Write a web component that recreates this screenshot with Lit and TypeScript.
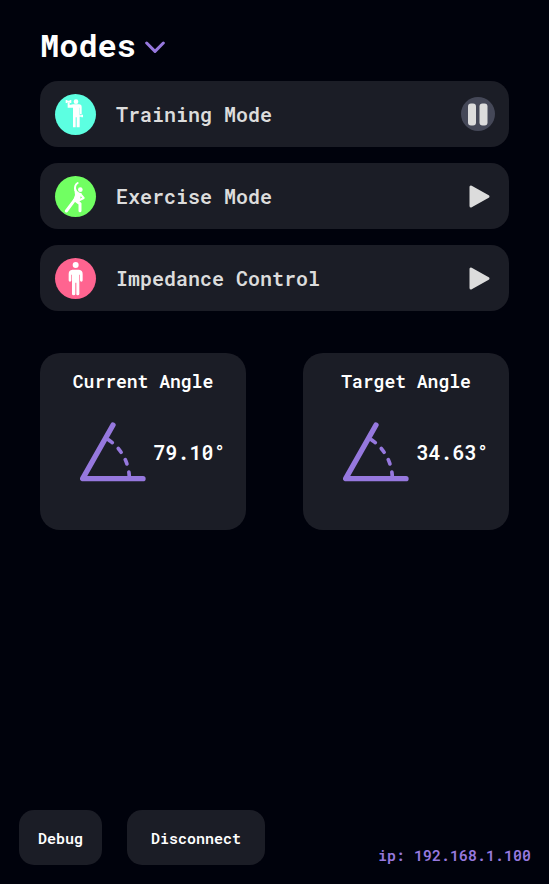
import { LitElement, html, css, svg } from "lit";
import { customElement, property, state } from "lit/decorators.js";

const figures = {
  training: svg`
    <circle cx="92" cy="50" r="7"/>
    <path d="M83 58H101Q109 58 109 66V88H104V68H103V127H94V97H91V127H83V68H67V52H73V60Z"/>
    <path d="M61 45h5v2h7v-2h5v9h-5v-2h-7v2h-5zM96 89h4v2h8v-2h5v8h-5v-2h-8v2h-4z"/>`,
  exercise: svg`
    <circle cx="105" cy="68" r="7"/>
    <path class="arm" d="M97 48C89 53 88 62 90 70"/>
    <path class="limb" d="M87 100L63 132M90 100L104 110V131"/>
    <path d="M87 67L92 66Q97 77 109 79L104 96L102 107L82 103L89 84Z"/>
    <path class="arm" d="M106 82L115 93L103 99"/>`,
  impedance: svg`
    <circle cx="91" cy="48" r="9"/>
    <path d="M81 62H101Q112 63 112 75V94Q112 98 108 98T104 94V77H102V135Q102 139 97 139T93 135V101H90V135Q90 139 85 139T80 135V77H78V94Q78 98 74 98T70 94V75Q70 63 81 62Z"/>`,
};

type Figure = keyof typeof figures;

@customElement("mode-row")
class ModeRow extends LitElement {
  @property() label = "";
  @property() figure: Figure = "training";
  @property({ type: Boolean }) active = false;

  static styles = css`
    :host {
      display: flex;
      align-items: center;
      gap: 20px;
      min-height: 66px;
      padding: 0 14px 0 15px;
      box-sizing: border-box;
      border-radius: 18px;
      background: #1b1d26;
    }
    .badge {
      flex: none;
      width: 41px;
      height: 41px;
      border-radius: 50%;
      fill: #fff;
    }
    .training { background: #5cffe1; }
    .exercise { background: #71ff62; }
    .impedance { background: #ff6490; }
    .limb, .arm {
      fill: none;
      stroke: #fff;
      stroke-width: 9;
      stroke-linecap: round;
      stroke-linejoin: round;
    }
    .arm { stroke-width: 6; }
    .label {
      flex: 1;
      margin: 0;
      font-size: 20px;
      line-height: 24px;
      font-weight: 600;
      color: #dcdcdc;
    }
    .toggle {
      flex: none;
      width: 34px;
      height: 34px;
      padding: 0;
      border: 0;
      border-radius: 50%;
      background: none;
      cursor: pointer;
    }
    .toggle.on { background: #454858; }
    .glyph {
      display: block;
      width: 34px;
      height: 34px;
      fill: #dcdcdc;
    }
    .play {
      stroke: #dcdcdc;
      stroke-width: 3;
      stroke-linejoin: round;
    }
  `;

  private toggle() {
    this.dispatchEvent(new CustomEvent("mode-toggle"));
  }

  render() {
    return html`
      <svg class="badge ${this.figure}" viewBox="29 27 123 123" aria-hidden="true">
        ${figures[this.figure]}
      </svg>
      <h2 class="label">${this.label}</h2>
      <button class="toggle ${this.active ? "on" : ""}" @click=${this.toggle}
        aria-label="${this.active ? "Pause" : "Start"} ${this.label}">
        <svg class="glyph" viewBox="0 0 34 34" aria-hidden="true">
          ${this.active
            ? svg`<rect x="7" y="6.5" width="8" height="22" rx="3"/>
                  <rect x="18.5" y="6.5" width="8" height="22" rx="3"/>`
            : svg`<path class="play" d="M10 8V27L27 17.5Z"/>`}
        </svg>
      </button>
    `;
  }
}

@customElement("angle-card")
class AngleCard extends LitElement {
  @property() label = "";
  @property({ type: Number }) value = 0;

  static styles = css`
    :host {
      display: block;
      padding: 16px 0 48px;
      border-radius: 20px;
      background: #1b1d26;
      color: #fff;
    }
    .title {
      margin: 0 0 29px;
      font-size: 18px;
      line-height: 24px;
      font-weight: 600;
      text-align: center;
    }
    .reading {
      display: flex;
      align-items: center;
      justify-content: center;
      gap: 7px;
      padding-left: 20px;
    }
    .angle {
      flex: none;
      width: 66px;
      height: 60px;
      fill: none;
      stroke: #9678de;
      stroke-linecap: round;
      stroke-linejoin: round;
      stroke-width: 16;
    }
    .arc {
      stroke-width: 11;
      stroke-dasharray: 14 25;
      stroke-dashoffset: -6;
    }
    .value {
      font-size: 20px;
      line-height: 24px;
      font-weight: 600;
    }
  `;

  render() {
    return html`
      <h2 class="title">${this.label}</h2>
      <div class="reading">
        <svg class="angle" viewBox="152 231 198 180" aria-hidden="true">
          <path d="M251 240L160 401H341"/>
          <path class="arc" d="M300 401A140 140 0 0 0 232 281"/>
        </svg>
        <output class="value">${this.value.toFixed(2)}°</output>
      </div>
    `;
  }
}

@customElement("app-root")
class AppRoot extends LitElement {
  @state() private open = true;
  @state() private running: Figure | null = "training";

  private modes: { figure: Figure; label: string }[] = [
    { figure: "training", label: "Training Mode" },
    { figure: "exercise", label: "Exercise Mode" },
    { figure: "impedance", label: "Impedance Control" },
  ];

  static styles = css`
    :host {
      display: flex;
      flex-direction: column;
      min-height: 100vh;
      box-sizing: border-box;
      background: #00020c;
      font-family: "Roboto Mono", "Liberation Mono", monospace;
    }
    .main { padding: 24px 40px; }
    .heading {
      margin: 0 0 15px;
      font-size: 32px;
      line-height: 42px;
    }
    .menu {
      display: flex;
      align-items: center;
      gap: 9px;
      padding: 0;
      border: 0;
      background: none;
      color: #fff;
      font: inherit;
      font-weight: 700;
      cursor: pointer;
    }
    .chevron {
      width: 20px;
      height: 12px;
      margin-top: 4px;
      fill: none;
      stroke: #9678de;
      stroke-width: 9;
      stroke-linecap: round;
      stroke-linejoin: round;
    }
    .modes {
      display: grid;
      gap: 16px;
    }
    .angles {
      display: grid;
      grid-template-columns: 1fr 1fr;
      gap: 57px;
      margin-top: 42px;
    }
    .footer {
      display: flex;
      align-items: flex-end;
      gap: 25px;
      margin-top: auto;
      padding: 0 18px 19px 19px;
      font-size: 15px;
      line-height: 20px;
    }
    .action {
      height: 55px;
      padding: 0 19px;
      border: 0;
      border-radius: 15px;
      background: #1b1d26;
      color: #fff;
      font: inherit;
      font-weight: 600;
      cursor: pointer;
    }
    .wide { padding: 0 24px; }
    .ip {
      margin: 0 0 0 auto;
      font-weight: 600;
      color: #9678de;
    }
  `;

  render() {
    return html`
      <main class="main">
        <h1 class="heading">
          <button class="menu" aria-expanded=${this.open} @click=${() => (this.open = !this.open)}>
            Modes
            <svg class="chevron" viewBox="345 64 60 36" aria-hidden="true">
              <path d="M350 70L375 95L400 70"/>
            </svg>
          </button>
        </h1>
        ${this.open
          ? html`<section class="modes">
              ${this.modes.map(
                (m) => html`<mode-row
                  .label=${m.label}
                  .figure=${m.figure}
                  .active=${this.running === m.figure}
                  @mode-toggle=${() => (this.running = this.running === m.figure ? null : m.figure)}
                ></mode-row>`
              )}
            </section>`
          : null}
        <section class="angles">
          <angle-card label="Current Angle" .value=${79.1}></angle-card>
          <angle-card label="Target Angle" .value=${34.63}></angle-card>
        </section>
      </main>
      <footer class="footer">
        <button class="action">Debug</button>
        <button class="action wide">Disconnect</button>
        <p class="ip">ip: 192.168.1.100</p>
      </footer>
    `;
  }
}
